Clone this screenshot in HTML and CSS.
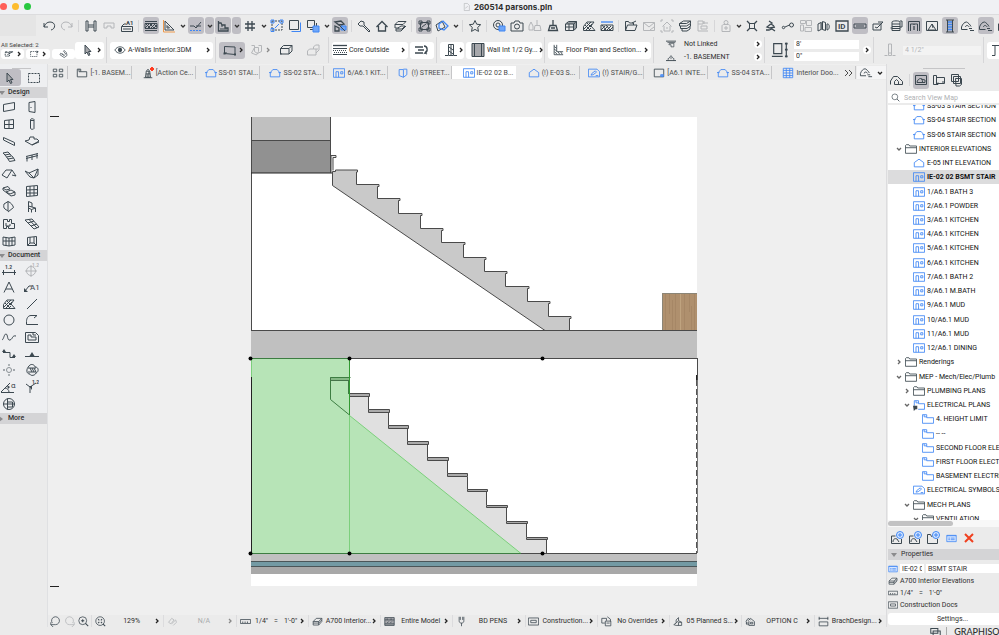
FILE: index.html
```html
<!DOCTYPE html>
<html lang="en">
<head>
<meta charset="utf-8">
<title>260514 parsons.pln</title>
<link rel="stylesheet" href="styles.css">
</head>
<body>
<svg class="sprite" aria-hidden="true">
  <symbol id="right" viewBox="0 0 6 8"><path class="w" d="M2 2l2 2-2 2"/></symbol>
  <symbol id="down" viewBox="0 0 8 8"><path class="w" d="M2 3l2 2 2-2"/></symbol>
  <symbol id="undo" viewBox="0 0 14 14"><path d="M2 4v4h4M2 8c1-3 3-5 6-5 6 0 6 7 1 8"/></symbol>
  <symbol id="redo" viewBox="0 0 14 14"><path d="M12 4v4H8M12 8c-1-3-3-5-6-5-6 0-6 7-1 8"/></symbol>
  <symbol id="beam" viewBox="0 0 14 14"><path d="M2 2h2v4h6V2h2v10h-2V8H4v4H2zM4 6v2M10 6v2"/></symbol>
  <symbol id="beamsm" viewBox="0 0 14 14"><path d="M2 4h10v5H9V7H5v2H2z"/></symbol>
  <symbol id="label" viewBox="0 0 14 14"><path d="M2 7l2-2h2M1.500 7.500h11v5h-11zM3 10h8"/><text class="t6" x="6" y="6">A1</text></symbol>
  <symbol id="hatch" viewBox="0 0 14 14"><path d="M1 2.500h12M1 11.500h12"/><path d="M1 4.500h12v5H1zM1 9l4-4M4 9l4-4M7 9l4-4M10 9l3-3M2 5l4 4M6 5l4 4M10 5l3 3"/></symbol>
  <symbol id="setsq" viewBox="0 0 14 14"><path d="M3 2v9h9zM5 6.500v2.500h2.500z"/><path class="o" d="M1.500 1v12H13"/></symbol>
  <symbol id="guide" viewBox="0 0 14 14"><path d="M1 7h4l2 2 5-6M7 7h5"/><path class="b dash" d="M1 11.500h12"/></symbol>
  <symbol id="snap" viewBox="0 0 14 14"><path class="w" d="M2.500 2v10H12V9H9V6H6L5 4H3"/><path d="M4 10h7M5 7h2"/></symbol>
  <symbol id="grid" viewBox="0 0 14 14"><path class="w" d="M5 2v10M9 2v10M2 5h10M2 9h10"/></symbol>
  <symbol id="resize" viewBox="0 0 14 14"><path class="dash" d="M2 2h10v9H2z"/><path class="b" d="M1 9.500h3v3H1zM10 1h3v3h-3zM1 1h3v3H1zM5 9l4-4"/></symbol>
  <symbol id="layers2" viewBox="0 0 14 14"><path d="M1.500 1.500h9v9h-9z"/><path class="b" d="M3.500 12.500h9v-9"/></symbol>
  <symbol id="dup" viewBox="0 0 14 14"><path d="M1.500 1.500h7v7h-7zM4 10.500h3M10.500 4v3"/><path class="bf" d="M7 7h6v6H7z"/></symbol>
  <symbol id="crane" viewBox="0 0 14 14"><path class="w" d="M2 3l6-1 3 3-5 1zM2 7l4 2v3H2zM8 6l3 3"/><path class="bf" d="M8 7h5v4H8z"/><path d="M6 6l6 6"/></symbol>
  <symbol id="pick" viewBox="0 0 14 14"><path d="M1 5l3-3 3 1v3l6 6-1 1-6-6H3z"/></symbol>
  <symbol id="home" viewBox="0 0 14 14"><path class="w" d="M1.500 8L7 2.500 12.500 8M3.500 7v5h7V7"/></symbol>
  <symbol id="sheet" viewBox="0 0 14 14"><path d="M2 5.500l3-3h8l-3 3zM2 5.500V9h4M5 9l3-2h4l-3 3H3v2h5l5-5"/></symbol>
  <symbol id="group" viewBox="0 0 14 14"><path d="M3.500 3.500h8v7h-8zM2 2h3v3H2zM10 2h3v3h-3zM10 9h3v3h-3zM2 9h3v3H2zM5 8l4-3"/></symbol>
  <symbol id="rot" viewBox="0 0 14 14"><path d="M1 6l6-4 3 6-7 4z"/><path class="b w" d="M4 5l4-3 5 5-4 4-5-2z"/></symbol>
  <symbol id="star" viewBox="0 0 14 14"><path d="M7 1.500l1.700 3.700 4 .5-3 2.700.8 4L7 10.400 3.500 12.400l.8-4-3-2.700 4-.5z"/></symbol>
  <symbol id="camb" viewBox="0 0 14 14"><circle cx="6" cy="6" r="4.500"/><circle cx="6" cy="6" r="2"/><path class="bf" d="M7 7h6v5H7z"/></symbol>
  <symbol id="cam" viewBox="0 0 14 14"><path d="M1 4h3l1-2h4l1 2h3v8H1z"/><circle cx="7" cy="7.500" r="2.500"/></symbol>
  <symbol id="brush" viewBox="0 0 14 14"><path class="w" d="M7 1v5M4 6.500h6l1.500 5h-9zM5 9h4"/></symbol>
  <symbol id="brush2" viewBox="0 0 14 14"><path d="M9 1v5M7 6.500h5l1 5H6zM3 3l2 4v4H1V7z"/></symbol>
  <symbol id="box" viewBox="0 0 14 14"><path d="M1.500 5l3-2.500h8V9l-3 2.500h-8zM1.500 5h8v6.500M9.500 5l3-2.500M2 8h7M5 5v6M3 4h8M11 4v6"/></symbol>
  <symbol id="fillh" viewBox="0 0 14 14"><path d="M1.500 11.500v-4L5 3h7L9 7l4 4.500zM2 10l7-7M4 11l6-6M7 11l2-2M3 6l5 5M5 4l4 4"/></symbol>
  <symbol id="hatchb" viewBox="0 0 14 14"><path class="b w" d="M1 3h12"/><path d="M1 6h12v5.500H1zM1 11l4-4M4 11l4-4M7 11l4-4M10 11l3-3M2 6l4 5M6 6l4 5"/></symbol>
  <symbol id="folder" viewBox="0 0 14 14"><path d="M1.500 11.500v-9h3l1 1.500h4v2M1.500 11.500l2-5.500h9.500l-2 5.500zM8 4l4-2"/></symbol>
  <symbol id="mail" viewBox="0 0 14 14"><path d="M1.500 3.500h11v8h-11zM1.500 3.500L7 8l5.500-4.500M8 11l4-3"/></symbol>
  <symbol id="ghome" viewBox="0 0 14 14"><path d="M1 3V1h2M11 1h2v2M1 11v2h2M13 11v2h-2M2.500 7.500L7 3l4.500 4.500M4 7v5h6V7M6 9h2"/></symbol>
  <symbol id="stack" viewBox="0 0 14 14"><path d="M1.500 4.500l4-2.500h7l-4 2.500zM1.500 4.500V7h7l4-2.500V2M2.500 7v2.500H9l3.500-2.500V4.500M4 9.500V12h5l3-2V7"/></symbol>
  <symbol id="node" viewBox="0 0 14 14"><path d="M2 2h5v3H2zM2 5v7h10M7 4h5M5 7h6v3H5zM8 2v3"/></symbol>
  <symbol id="person" viewBox="0 0 14 14"><circle cx="7" cy="3.500" r="2"/><path d="M3 12.500V7c0-1 1-1.500 2-1.500h4c1 0 2 .5 2 1.500v5.500zM6 8h2v2H6z"/></symbol>
  <symbol id="cross" viewBox="0 0 14 14"><path class="w" d="M2 2l3 3M12 2L9 5M2 12l3-3M12 12L9 9"/><path d="M4.500 4.500h5v5h-5z"/></symbol>
  <symbol id="runner" viewBox="0 0 14 14"><path class="w" d="M6 2l3 2-5 4 3 1 5-1M8 5l3 2M3 11h3l3-1 3 2"/></symbol>
  <symbol id="link" viewBox="0 0 14 14"><circle cx="10.500" cy="6" r="2"/><circle cx="2.500" cy="8.500" r="1.200"/><path d="M4 8l4.500-2"/></symbol>
  <symbol id="puzzle" viewBox="0 0 14 14"><path d="M1.500 1.500h5v3h-5zM7.500 1.500h5v5h-5zM1.500 6h3v6h-3zM6 8.500h6.500v4H6z"/></symbol>
  <symbol id="map" viewBox="0 0 14 14"><path d="M1 5l3-1.500v7L1 12zM5.500 2.500l3 1v8l-3-1zM10 5c3-1 3 6 0 6zM5 3v8"/></symbol>
  <symbol id="idb" viewBox="0 0 14 14"><path class="w" d="M1 2h12v10H1z"/><text class="t8" x="3" y="10">ID</text></symbol>
  <symbol id="bar" viewBox="0 0 14 14"><path d="M1 5h12v4H1zM3 7h8"/></symbol>
  <symbol id="check" viewBox="0 0 14 14"><path d="M2 5h8v6H2zM4 8l2 1 6-6M7 3h5"/></symbol>
  <symbol id="db" viewBox="0 0 14 14"><path d="M3 3c0-1.500 8-1.500 8 0v8.500H3zM3 5h8M3 7.500h8M3 9.500h8M1.500 9h2M11 2h2v6h-2"/></symbol>
  <symbol id="info" viewBox="0 0 14 14"><path d="M1.500 12V2.500h11V12M3.500 12V5h7v7"/><path class="w" d="M7 5v1M7 7v4"/></symbol>
  <symbol id="portal" viewBox="0 0 14 14"><path d="M1 12.500h3v-10h9M4 2.500H1"/></symbol>
  <symbol id="tri" viewBox="0 0 14 14"><path d="M1.500 2.500h11v9h-11zM3 11l4-6 4 6zM7 5l1 4"/></symbol>
  <symbol id="film" viewBox="0 0 14 14"><path class="b w" d="M5 3h4M5 5.500h4M5 8h4M5 10.500h4"/><path d="M4.500 1v12M9.500 1v12M3 13h8M3 1h8"/></symbol>
  <symbol id="cloud" viewBox="0 0 14 14"><path d="M.5 10.500V8c1-3 3-5 5-5 1 0 4 3 4.500 4.500M.5 10.500h6M4.500 8c0-2 3-2 3.500 0M8 9.500h3M9 11.500h4"/></symbol>
  <symbol id="house2" viewBox="0 0 14 14"><path d="M.5 11.500V8l3-4.500h4l5 5v3h-8v-3l2-2 2 2v3"/></symbol>
  <symbol id="eye" viewBox="0 0 14 14"><path d="M1 7c3-5 9-5 12 0-3 5-9 5-12 0z"/><circle class="f" cx="7" cy="7" r="2.500"/></symbol>
  <symbol id="arrow" viewBox="0 0 14 14"><path class="gf" d="M5 2v9l2-2 1.500 3.500 1.500-.7L8.500 8.500H11z"/></symbol>
  <symbol id="marq" viewBox="0 0 14 14"><path class="dash" d="M1.500 2.500h11v9h-11z"/></symbol>
  <symbol id="seltype" viewBox="0 0 14 14"><path class="dash w" d="M1 5h6v5H1z"/><path class="w" d="M6 4h6M4 8l7-4M1 4h3"/></symbol>
  <symbol id="marq2" viewBox="0 0 14 14"><path class="dash" d="M1.500 3.500h9v7h-9z"/><path class="f" d="M10 2l3 2-3 2z"/></symbol>
  <symbol id="magnet" viewBox="0 0 14 14"><path d="M2 8l6 4 4-3-1-4-3-3-1 1 3 4-2 2-5-3zM5 6l2 3"/></symbol>
  <symbol id="para" viewBox="0 0 14 14"><path d="M1.500 10.500v-7L12 4v7.500zM1.500 10.500l2-1"/><path class="f" d="M.5 9.500h2v2h-2zM11 10.500h2v2h-2z"/></symbol>
  <symbol id="shield" viewBox="0 0 14 14"><path d="M1.500 2.500h3v6l3 2 4-2v-6h-3M4.500 4.500h4v4L6.500 12l-5-2z"/></symbol>
  <symbol id="cube" viewBox="0 0 14 14"><path d="M1.500 5.500l3-3H13l-3 3zM1.500 5.500V11H10l3-3V2.500M10 5.500V11"/><path class="f" d="M1 10h1.500v1.500H1z"/></symbol>
  <symbol id="cube2" viewBox="0 0 14 14"><path d="M1.500 8l2-2h4V4l2-2H13v5l-3 3v2H1.500zM7.500 6H12M10 6v4"/></symbol>
  <symbol id="core" viewBox="0 0 14 14"><path class="w" d="M0 2.500h14"/><path d="M0 5.500h14M0 11.500h14"/><path class="dot" d="M0 7.500h14M1 9.500h13"/></symbol>
  <symbol id="flip" viewBox="0 0 14 14"><path class="w" d="M0 4h8M0 10h8M3 7h6"/><path class="w" d="M9 3c4 0 4 6 1 7l1.500-2M10 10l2 1"/></symbol>
  <symbol id="wallp" viewBox="0 0 14 14"><path d="M4.500 1.500h5v11h-5zM1 12.500h3M10 12.500h3M7 2v10M5 4l4 3M5 8l4 3"/></symbol>
  <symbol id="swatch" viewBox="0 0 14 14"><path class="gf" d="M1 .5h12v13H1zM3.500 1v12M10.500 1v12"/></symbol>
  <symbol id="corner" viewBox="0 0 14 14"><path d="M2.500 1v11.500H13M5.500 1v8H13M2.500 3l3 2M2.500 6l3 2M3 9l3 3M7 9l2 3M10 9l2 3"/></symbol>
  <symbol id="topl" viewBox="0 0 14 14"><path class="w" d="M0 3h14"/><path d="M2 5h11M5 6h6v5H7V8H4z"/></symbol>
  <symbol id="botl" viewBox="0 0 14 14"><path class="w" d="M0 12h14"/><path d="M3 12V9h1l3-4 3 4h1v3M7 7v3"/></symbol>
  <symbol id="height" viewBox="0 0 20 20"><path class="w" d="M3 3h9v11H3zM1 17h12"/><path class="w" d="M17 2v16"/><path class="f" d="M15.500 2h3v2h-3zM15.500 8.500h3v2h-3zM15.500 16h3v2h-3z"/></symbol>
  <symbol id="thick" viewBox="0 0 14 14"><path d="M5.500 1v9M8.500 1v9M5.500 10h3v2.500h-3zM1.500 12.500h3M9.500 12.500h3M5.500 1h3"/></symbol>
  <symbol id="grid4" viewBox="0 0 14 14"><path d="M1.500 2.500h4v3h-4zM8.500 2.500h4v3h-4zM1.500 8.500h4v3h-4zM8.500 8.500h4v3h-4z"/></symbol>
  <symbol id="plan" viewBox="0 0 14 14"><path d="M1.500 11.500v-9h4v3h7v6zM3.500 2.500v3h2"/></symbol>
  <symbol id="tower" viewBox="0 0 14 14"><path d="M4 12l1-7h4l1 7zM5 5l2-2.500L9 5M2 12.500h10M4.500 8h5M6 12V8M8 5v7"/></symbol>
  <symbol id="sec" viewBox="0 0 14 14"><path class="b" d="M1.500 11.500v-5l3-3.500h5l3 3.500v5zM0 6.500h3M11 6.500h3"/></symbol>
  <symbol id="ie" viewBox="0 0 14 14"><path class="b" d="M.5 2h13v10H.5zM3.500 12V5.500h3V12M9 5.500h2.500V8H9z"/></symbol>
  <symbol id="elev" viewBox="0 0 14 14"><path class="b" d="M2.500 10V3h5v9zM7.500 12l4-3V2.500h-4"/></symbol>
  <symbol id="pent" viewBox="0 0 14 14"><path class="b" d="M1.500 11.500v-5L7 2.500l5.500 4v5z"/></symbol>
  <symbol id="draw" viewBox="0 0 14 14"><path class="b" d="M.5 2.500h10l3 3v6H.500zM3.500 9.500l1-2 4-3 1.500 1.500-4 3zM9 10h3"/></symbol>
  <symbol id="lay" viewBox="0 0 14 14"><path d="M1.500 2.500h11v9h-11z"/><path class="bf" d="M9 9h3v2H9z"/></symbol>
  <symbol id="sched" viewBox="0 0 14 14"><path class="b" d="M1.500 1.500h11v11h-11zM1.500 4h11M1.500 7h11M1.500 10h11M5 1.500v11M9 1.500v11"/></symbol>
  <symbol id="wall" viewBox="0 0 14 14"><path d="M1.500 4.500l11-2v7l-11 2z"/></symbol>
  <symbol id="door" viewBox="0 0 14 14"><path d="M4 2.500l6-1v11l-6-1zM6 7v1"/></symbol>
  <symbol id="win" viewBox="0 0 14 14"><path d="M2.500 3.500l9-1v9h-9zM2.500 7.500h9M7 3v8.500"/></symbol>
  <symbol id="col" viewBox="0 0 14 14"><path d="M5.500 2.500c0-1 3.500-1 3.500 0v9c0 1-3.500 1-3.500 0zM5.500 3.500H9"/></symbol>
  <symbol id="tbeam" viewBox="0 0 14 14"><path d="M1.500 3.500l11 5v3l-11-5.500z"/></symbol>
  <symbol id="slab" viewBox="0 0 14 14"><path d="M0 7l4-1 1-3h4v2h3l2 2-7 4zM7 11l7-3"/></symbol>
  <symbol id="stair" viewBox="0 0 14 14"><path d="M1 3l5-1 2 2-5 1zM3 5l1.500 2 5-1L8 4M4.500 7L6 9l5.500-1L10 6M6 9l1.500 2.500 5.500-1L11.500 8"/></symbol>
  <symbol id="rail" viewBox="0 0 14 14"><path d="M1 6.500l12-3M1 8.500l12-3M2 6.500v5M7 5v5M12 3.500v5"/></symbol>
  <symbol id="roof" viewBox="0 0 14 14"><path d="M0 8l4-5h6L5 11zM10 3l4 6-4-1"/></symbol>
  <symbol id="shell" viewBox="0 0 14 14"><path d="M0 4l4 2 9-4-4 9-4-1zM4 6l5 5M13 2v6l-4 3"/></symbol>
  <symbol id="sky" viewBox="0 0 14 14"><path d="M1 4l5-1.500 2 2.500-4 1zM4 8l5-2 4 2-5 2zM1 4v2l8 6 4-1V8"/></symbol>
  <symbol id="cw" viewBox="0 0 14 14"><path d="M1.500 2.500l11-1v10l-11 1zM1.500 6l11-.5M1.500 9h11M5 2v10M9 2v10"/></symbol>
  <symbol id="morph" viewBox="0 0 14 14"><path d="M2 4l4-2.500V11L3 9C1.500 8 1.500 6 2 4zM6 1.500c3 1 5 4 5.500 6L6 12"/></symbol>
  <symbol id="chair" viewBox="0 0 14 14"><path d="M3.500 1.500L7 3v4l-3.500-1zM3.500 6v6M3.500 8l3 1.500 4-1.500L7 7M6.500 9.500v3M10.500 8v4"/></symbol>
  <symbol id="zone" viewBox="0 0 14 14"><path d="M1.500 2.500h4v2h2v-2h2v4h3v5h-6v-2h-2v2h-3zM4 6v3h4V7"/></symbol>
  <symbol id="mesh" viewBox="0 0 14 14"><path d="M0 3l7-1 7 8-5 2zM4 2.500l8 8.500M3 6l6-2M6 9l6-2"/></symbol>
  <symbol id="opening" viewBox="0 0 14 14"><path d="M1 3l6 1 6-1v8l-6 1-6-1zM7 4v8M1 7h12M4 3.500v8M10 3.500v8"/></symbol>
  <symbol id="obj" viewBox="0 0 14 14"><path d="M2.500 3.500l9-1v9h-9zM5 3v6h4V3M2.500 11.500L5 9M11.500 11.500L9 9"/></symbol>
  <symbol id="dim" viewBox="0 0 14 14"><path d="M0 9.500h14M1.500 7v5M12.500 7v5"/><text class="t5" x="3" y="6">1.2</text></symbol>
  <symbol id="level" viewBox="0 0 14 14"><circle cx="6" cy="8" r="4.500"/><path d="M6 2v12M0 8h12"/><text class="t5" x="7" y="4">1.2</text></symbol>
  <symbol id="textA" viewBox="0 0 14 14"><path d="M2 12.500L7 2l5 10.500M4 9h6"/></symbol>
  <symbol id="a1" viewBox="0 0 16 14"><path d="M1 11l4-5h3"/><path class="f" d="M0 8v4h4z"/><text class="t8 n" x="6" y="10">A1</text></symbol>
  <symbol id="line" viewBox="0 0 14 14"><path d="M2 12L12 2"/></symbol>
  <symbol id="circ" viewBox="0 0 14 14"><circle cx="7" cy="7" r="5"/></symbol>
  <symbol id="poly" viewBox="0 0 14 14"><path d="M12 2.500H6c-3 0-4.500 3-4.500 6v3H13M12 2.500L9 5"/></symbol>
  <symbol id="spl" viewBox="0 0 14 14"><path d="M0 10c2-1 2-6 4-6s1 7 4 6 2-5 6-4"/></symbol>
  <symbol id="drw" viewBox="0 0 14 14"><path d="M.5 2.500h10l3 3v7H.5zM3 10V5h3v2h5v3zM8 3v2h3"/></symbol>
  <symbol id="sect" viewBox="0 0 14 14"><path d="M1 5.500h7v5h5"/><path class="f" d="M0 5l2-3 2 3zM10 10l2-3 2 3z"/></symbol>
  <symbol id="elv" viewBox="0 0 14 14"><path d="M0 9.500h14"/><path class="f" d="M4.500 9L7 5l2.500 4z"/></symbol>
  <symbol id="iel" viewBox="0 0 14 14"><circle cx="7" cy="7" r="2.500"/><path class="w" d="M7 1v2M7 11v2M1 7h2M11 7h2"/></symbol>
  <symbol id="wk" viewBox="0 0 14 14"><path d="M4 3c2-3 6-1 6 1 4 0 4 5 1 6-1 3-6 3-6 1-4 0-4-5-1-8zM3 5h8M3 9h8M5 5l2 4M7 5l2 4M9 5l2 4"/></symbol>
  <symbol id="ang" viewBox="0 0 16 14"><path d="M0 12.500h13M0 12L9 3M4 8c2 0 4 2 4 4"/><path class="f" d="M6 5l3 2-2 2z"/><text class="t8 n" x="10" y="8">α</text></symbol>
  <symbol id="rad" viewBox="0 0 14 14"><path d="M1 4l4 3 6-4M5 7v6"/><path class="f" d="M4 6h3v4z"/><text class="t5" x="7" y="4">1.2</text></symbol>
  <symbol id="det" viewBox="0 0 14 14"><circle cx="7" cy="7" r="5.500"/><path d="M5.500 1.500v11M1 7h12M5.500 5h5v5h-5"/></symbol>
  <symbol id="fold" viewBox="0 0 14 14"><path d="M.5 12V3l1-1h3l1 1.500h8V12zM.5 5.500h13"/></symbol>
  <symbol id="bfold" viewBox="0 0 14 14"><path class="b" d="M.5 12V2h5v3.500h8V12zM2.500 2v2.500h3"/></symbol>
  <symbol id="bfoldl" viewBox="0 0 14 14"><path class="b" d="M1.500 8V2h5v3.500h7V12H6M3.500 2v2.500h3"/><path class="f" d="M0 8h5v4H3L1 14z"/></symbol>
  <symbol id="search" viewBox="0 0 14 14"><circle cx="6" cy="6" r="4.500"/><path class="w" d="M9.500 9.500L13 13"/></symbol>
  <symbol id="vmap" viewBox="0 0 14 14"><path d="M1.500 2.500h11v9h-11zM3 9.500c0-2 2-4 3.500-4s2 1 2 4zM7 6l4 1v2.500H8"/></symbol>
  <symbol id="lbook" viewBox="0 0 14 14"><path d="M1.500 2.500h3v9h-3zM4.500 4.500h8v6h-8M3 11.500h3v-2M10 9h2"/></symbol>
  <symbol id="pub" viewBox="0 0 14 14"><path d="M1.500 1.500h7v7h-7zM3.500 3.500h7v7h-7zM5.500 5.500h6v6l-2 1.500H6z"/></symbol>
  <symbol id="addv" viewBox="0 0 14 14"><path d="M1.500 5v7.500h10V8M1.500 5h4M3 11c0-3 2-4 4-3l2 3"/><circle class="bl" cx="10" cy="4" r="3.500"/><path class="b" d="M10 2v4M8 4h4"/></symbol>
  <symbol id="addf" viewBox="0 0 14 14"><path d="M1.500 12.500v-9h3l1 2h1M1.500 12.500h10V8"/><circle class="bl" cx="10" cy="4" r="3.500"/><path class="b" d="M10 2v4M8 4h4"/></symbol>
  <symbol id="props" viewBox="0 0 14 14"><path class="bl" d="M1 3h12v8H1z"/><path class="b" d="M1 3.500h12M3 6.500h2M6 6.500h5M3 8.500h2M6 8.500h5"/></symbol>
  <symbol id="x" viewBox="0 0 14 14"><path class="r" d="M3 3l8 8M11 3l-8 8"/></symbol>
  <symbol id="lyr" viewBox="0 0 14 14"><path d="M1.500 11.500V7l4-4h7v4l-4 4.500zM1.500 7h7l4-4M8.500 7v4.500M1.500 9h7l4-4"/></symbol>
  <symbol id="scale" viewBox="0 0 14 14"><path d="M.5 4.500h13v5H.5zM3.500 9V7M6.500 9V7M9.500 9V7"/></symbol>
  <symbol id="frame" viewBox="0 0 14 14"><path d="M.5 2.500h13v9H.5zM3.500 5.500h7v3h-7z"/></symbol>
  <symbol id="zoomb" viewBox="0 0 14 14"><path d="M3 9a5 5 0 1 1 4 2H1M1 8v3M4 14l-3-3"/></symbol>
  <symbol id="zoomf" viewBox="0 0 14 14"><path d="M11 9a5 5 0 1 0-4 2h6M13 8v3M10 14l3-3"/></symbol>
  <symbol id="zoomp" viewBox="0 0 14 14"><circle cx="6" cy="6" r="5"/><path class="w" d="M9.500 9.500L13 13M4 6h4M6 4v4"/></symbol>
  <symbol id="zoomx" viewBox="0 0 14 14"><circle cx="6.500" cy="6.500" r="5.500"/><path class="w" d="M10 10l3 3M4 4l1.500 1.500M9 4L7.500 5.500M4 9l1.500-1.500M9 9L7.500 7.500"/></symbol>
  <symbol id="orient" viewBox="0 0 14 14"><path d="M2 8l4-5 3 2-4 5zM6 10l5-5 1 3-4 4"/></symbol>
  <symbol id="struct" viewBox="0 0 14 14"><path class="gf" d="M1 2h12v10H1z"/><path d="M1 5h12M4 9l2-2M8 9l2-2M4 3v2M9 3v2M1 10h12"/></symbol>
  <symbol id="pen" viewBox="0 0 14 14"><path d="M4 1v5c0 2 1 3 3 3s3-1 3-3V1M7 9v4M5.500 1v4M8.500 1v4"/></symbol>
  <symbol id="over" viewBox="0 0 14 14"><path d="M1 3h6v3M1 3v6h4M5.500 6.500h7v6h-7zM8 1l4 3v3M7 9h4"/></symbol>
  <symbol id="reno" viewBox="0 0 14 14"><path d="M1 11l3-2V5l3-3v4l4 2v4H4zM7 6l-3 3M7 12V8h4"/></symbol>
  <symbol id="opt" viewBox="0 0 14 14"><path d="M1 7l3-4 3 2M2 7v4M4 6l3-3 5 4v5H5V7zM1 9h4M3 11h2M7 8h3v2H7z"/></symbol>
  <symbol id="dims" viewBox="0 0 14 14"><path d="M1 3h12M1.500 1v4M12.500 1v4M1.500 7.500h11v5h-11z"/></symbol>
  <symbol id="wins" viewBox="0 0 14 14"><path class="w" d="M1 2h9v6H1zM4 11V5h9v6z"/></symbol>
  <symbol id="doc" viewBox="0 0 14 14"><path d="M3.500 1.500h5l3 3v8h-8zM5 9l4-3"/></symbol>
</svg>

<header class="titlebar">
  <div class="lights"><i class="red"></i><i class="yellow"></i><i class="green"></i></div>
  <h1><svg class="ic dim"><use href="#doc"/></svg>260514 parsons.pln</h1>
</header>

<nav class="tools" aria-label="Standard toolbar">
  <div class="blank"></div>
  <button class="tb" aria-label="Undo"><svg class="ic"><use href="#undo"/></svg></button>
  <button class="tb dim" aria-label="Redo"><svg class="ic"><use href="#redo"/></svg></button>
  <hr>
  <button class="tb" aria-label="Pick up"><svg class="ic"><use href="#beam"/></svg></button>
  <button class="tb dim" aria-label="Inject"><svg class="ic"><use href="#beamsm"/></svg></button>
  <button class="tb" aria-label="Favorites"><svg class="ic"><use href="#label"/></svg></button>
  <hr>
  <button class="tb on" aria-label="Trace"><svg class="ic"><use href="#hatch"/></svg></button>
  <button class="tb" aria-label="Set square"><svg class="ic"><use href="#setsq"/></svg></button>
  <button class="cv" aria-label="Set square options"><svg><use href="#down"/></svg></button>
  <button class="tb on" aria-label="Guides"><svg class="ic"><use href="#guide"/></svg></button>
  <button class="cv on" aria-label="Guide options"><svg><use href="#down"/></svg></button>
  <button class="tb on" aria-label="Snap"><svg class="ic"><use href="#snap"/></svg></button>
  <button class="cv on" aria-label="Snap options"><svg><use href="#down"/></svg></button>
  <button class="tb" aria-label="Grid"><svg class="ic"><use href="#grid"/></svg></button>
  <button class="cv" aria-label="Grid options"><svg><use href="#down"/></svg></button>
  <button class="tb" aria-label="Resize"><svg class="ic"><use href="#resize"/></svg></button>
  <button class="tb" aria-label="Layers"><svg class="ic"><use href="#layers2"/></svg></button>
  <button class="tb" aria-label="Duplicate"><svg class="ic"><use href="#dup"/></svg></button>
  <button class="cv" aria-label="Duplicate options"><svg><use href="#down"/></svg></button>
  <button class="tb on" aria-label="Suspend groups"><svg class="ic"><use href="#crane"/></svg></button>
  <hr>
  <button class="tb" aria-label="Find"><svg class="ic"><use href="#pick"/></svg></button>
  <button class="tb" aria-label="Home"><svg class="ic"><use href="#home"/></svg></button>
  <button class="tb" aria-label="Section"><svg class="ic"><use href="#sheet"/></svg></button>
  <hr>
  <button class="tb on" aria-label="Group"><svg class="ic"><use href="#group"/></svg></button>
  <button class="tb" aria-label="Rotate"><svg class="ic"><use href="#rot"/></svg></button>
  <button class="cv" aria-label="Rotate options"><svg><use href="#down"/></svg></button>
  <hr>
  <button class="tb" aria-label="Star"><svg class="ic"><use href="#star"/></svg></button>
  <hr>
  <button class="tb" aria-label="Render"><svg class="ic"><use href="#camb"/></svg></button>
  <button class="tb" aria-label="Camera"><svg class="ic"><use href="#cam"/></svg></button>
  <button class="tb dim" aria-label="Surface brush"><svg class="ic"><use href="#brush2"/></svg></button>
  <button class="tb" aria-label="Brush"><svg class="ic"><use href="#brush"/></svg></button>
  <button class="tb" aria-label="Materials"><svg class="ic"><use href="#box"/></svg></button>
  <button class="tb" aria-label="Fills"><svg class="ic"><use href="#fillh"/></svg></button>
  <button class="tb" aria-label="Composites"><svg class="ic"><use href="#hatchb"/></svg></button>
  <hr>
  <div class="late">
    <button class="tb" aria-label="Open"><svg class="ic"><use href="#folder"/></svg></button>
    <button class="tb dim" aria-label="Send"><svg class="ic"><use href="#mail"/></svg></button>
    <button class="tb dim" aria-label="Project"><svg class="ic"><use href="#ghome"/></svg></button>
    <button class="tb" aria-label="Stories"><svg class="ic"><use href="#stack"/></svg></button>
    <button class="tb dim" aria-label="Nodes"><svg class="ic"><use href="#node"/></svg></button>
    <hr>
    <button class="tb dim" aria-label="Teamwork"><svg class="ic"><use href="#person"/></svg></button>
    <button class="cv" aria-label="Teamwork options"><svg><use href="#down"/></svg></button>
    <button class="tb" aria-label="Fit"><svg class="ic"><use href="#cross"/></svg></button>
    <button class="tb" aria-label="Walk"><svg class="ic"><use href="#runner"/></svg></button>
    <button class="tb" aria-label="Hotlink"><svg class="ic"><use href="#link"/></svg></button>
    <button class="tb dim" aria-label="Module"><svg class="ic"><use href="#puzzle"/></svg></button>
    <button class="tb" aria-label="Map"><svg class="ic"><use href="#map"/></svg></button>
    <button class="tb" aria-label="Element ID"><svg class="ic"><use href="#idb"/></svg></button>
    <button class="tb on" aria-label="Tracker"><svg class="ic"><use href="#bar"/></svg></button>
    <button class="tb" aria-label="Check"><svg class="ic"><use href="#check"/></svg></button>
    <button class="tb" aria-label="Attributes"><svg class="ic"><use href="#db"/></svg></button>
    <button class="tb on" aria-label="Info box"><svg class="ic"><use href="#info"/></svg></button>
    <button class="tb" aria-label="Terrain"><svg class="ic"><use href="#tri"/></svg></button>
    <button class="tb on" aria-label="Tab bar"><svg class="ic"><use href="#film"/></svg></button>
    <button class="tb" aria-label="Navigator popup"><svg class="ic"><use href="#cloud"/></svg></button>
    <button class="tb on" aria-label="Navigator"><svg class="ic"><use href="#cloud"/></svg></button>
    <button class="tb" aria-label="Organizer"><svg class="ic"><use href="#box"/></svg></button>
  </div>
</nav>

<section class="info" aria-label="Info box">
  <div class="sel">
    <span>All Selected: 2</span>
    <div>
      <button aria-label="Selection type"><svg class="ic"><use href="#seltype"/></svg><svg class="ch"><use href="#right"/></svg></button>
      <button aria-label="Marquee type"><svg class="ic"><use href="#marq2"/></svg><svg class="ch"><use href="#right"/></svg></button>
      <button aria-label="Magnet"><svg class="ic"><use href="#magnet"/></svg></button>
    </div>
  </div>
  <button class="pop small" aria-label="Arrow"><svg class="ic"><use href="#arrow"/></svg><svg class="ch"><use href="#right"/></svg></button>
  <hr>
  <button class="pop wide"><svg class="ic"><use href="#eye"/></svg><span>A-Walls Interior.3DM</span><svg class="ch"><use href="#right"/></svg></button>
  <hr>
  <button class="pop flat on" aria-label="Straight wall"><svg class="ic"><use href="#para"/></svg><svg class="ch"><use href="#right"/></svg></button>
  <button class="pop flat dim" aria-label="Curved wall"><svg class="ic"><use href="#shield"/></svg><svg class="ch"><use href="#right"/></svg></button>
  <button class="pop flat" aria-label="Single"><svg class="ic"><use href="#cube"/></svg></button>
  <button class="pop flat dim" aria-label="Chained"><svg class="ic"><use href="#cube2"/></svg></button>
  <hr>
  <button class="pop mid"><svg class="ic"><use href="#core"/></svg><span>Core Outside</span><svg class="ch"><use href="#right"/></svg></button>
  <button class="pop tiny" aria-label="Flip wall"><svg class="ic"><use href="#flip"/></svg></button>
  <hr>
  <button class="pop tiny" aria-label="Wall profile"><svg class="ic"><use href="#wallp"/></svg><svg class="ch"><use href="#right"/></svg></button>
  <button class="pop mid mat"><svg class="ic"><use href="#swatch"/></svg><span>Wall Int 1/2 Gy...</span><svg class="ch"><use href="#right"/></svg></button>
  <hr>
  <button class="pop wide"><svg class="ic"><use href="#corner"/></svg><span>Floor Plan and Section...</span><svg class="ch"><use href="#right"/></svg></button>
  <hr>
  <div class="links">
    <svg class="ic"><use href="#topl"/></svg><span>Not Linked</span><button class="round" aria-label="Top link"><svg class="ch"><use href="#right"/></svg></button>
    <svg class="ic"><use href="#botl"/></svg><span>-1. BASEMENT</span><button class="round" aria-label="Home story"><svg class="ch"><use href="#right"/></svg></button>
  </div>
  <hr>
  <svg class="ic hgt"><use href="#height"/></svg>
  <div class="fields">
    <input type="text" aria-label="Wall height" value="8'">
    <input type="text" aria-label="Base offset" value="0&quot;">
  </div>
  <button class="round" aria-label="Height settings"><svg class="ch"><use href="#right"/></svg></button>
  <hr>
  <svg class="ic dim thk"><use href="#thick"/></svg>
  <input class="thin" type="text" aria-label="Wall thickness" value="4 1/2&quot;" disabled>
  <hr>
  <button class="pop edge" aria-label="Geometry"><svg class="ic"><use href="#portal"/></svg></button>
</section>

<div class="work">
  <aside class="palette" aria-label="Toolbox">
    <div class="grip"></div>
    <div class="top">
      <button class="on" aria-label="Arrow"><svg class="ic"><use href="#arrow"/></svg></button>
      <button aria-label="Marquee"><svg class="ic"><use href="#marq"/></svg></button>
    </div>
    <h2><svg class="tri"><path d="M0 1h6L3 5z"/></svg>Design</h2>
    <div class="set">
      <button aria-label="Wall"><svg class="ic"><use href="#wall"/></svg></button><button aria-label="Door"><svg class="ic"><use href="#door"/></svg></button>
      <button aria-label="Window"><svg class="ic"><use href="#win"/></svg></button><button aria-label="Column"><svg class="ic"><use href="#col"/></svg></button>
      <button aria-label="Beam"><svg class="ic"><use href="#tbeam"/></svg></button><button aria-label="Slab"><svg class="ic lg"><use href="#slab"/></svg></button>
      <button aria-label="Stair"><svg class="ic"><use href="#stair"/></svg></button><button aria-label="Railing"><svg class="ic"><use href="#rail"/></svg></button>
      <button aria-label="Roof"><svg class="ic lg"><use href="#roof"/></svg></button><button aria-label="Shell"><svg class="ic"><use href="#shell"/></svg></button>
      <button aria-label="Skylight"><svg class="ic"><use href="#sky"/></svg></button><button aria-label="Curtain wall"><svg class="ic"><use href="#cw"/></svg></button>
      <button aria-label="Morph"><svg class="ic"><use href="#morph"/></svg></button><button aria-label="Object"><svg class="ic"><use href="#chair"/></svg></button>
      <button aria-label="Zone"><svg class="ic"><use href="#zone"/></svg></button><button aria-label="Mesh"><svg class="ic lg"><use href="#mesh"/></svg></button>
      <button aria-label="Facade"><svg class="ic"><use href="#opening"/></svg></button><button aria-label="Opening"><svg class="ic"><use href="#obj"/></svg></button>
    </div>
    <h2><svg class="tri"><path d="M0 1h6L3 5z"/></svg>Document</h2>
    <div class="set">
      <button aria-label="Dimension"><svg class="ic"><use href="#dim"/></svg></button><button class="dim" aria-label="Level dimension"><svg class="ic"><use href="#level"/></svg></button>
      <button aria-label="Text"><svg class="ic"><use href="#textA"/></svg></button><button aria-label="Label"><svg class="ic lg"><use href="#a1"/></svg></button>
      <button aria-label="Fill"><svg class="ic"><use href="#fillh"/></svg></button><button aria-label="Line"><svg class="ic"><use href="#line"/></svg></button>
      <button aria-label="Circle"><svg class="ic"><use href="#circ"/></svg></button><button aria-label="Polyline"><svg class="ic"><use href="#poly"/></svg></button>
      <button aria-label="Spline"><svg class="ic"><use href="#spl"/></svg></button><button aria-label="Drawing"><svg class="ic"><use href="#drw"/></svg></button>
      <button aria-label="Section"><svg class="ic"><use href="#sect"/></svg></button><button aria-label="Elevation"><svg class="ic"><use href="#elv"/></svg></button>
      <button class="mut" aria-label="Interior elevation"><svg class="ic"><use href="#iel"/></svg></button><button aria-label="Worksheet"><svg class="ic"><use href="#wk"/></svg></button>
      <button aria-label="Angle dimension"><svg class="ic lg"><use href="#ang"/></svg></button><button aria-label="Radial dimension"><svg class="ic"><use href="#rad"/></svg></button>
      <button aria-label="Detail"><svg class="ic"><use href="#det"/></svg></button>
    </div>
    <h2><svg class="tri"><path d="M0 0v6l4-3z"/></svg>More</h2>
  </aside>

  <main>
    <nav class="tabs" aria-label="Open views">
      <button class="all" aria-label="All tabs"><svg class="ic"><use href="#grid4"/></svg></button>
      <button><svg class="ic"><use href="#plan"/></svg>[-1. BASEM...</button>
      <button class="alert"><svg class="ic"><use href="#tower"/></svg>[Action Ce...</button>
      <button><svg class="ic"><use href="#sec"/></svg>SS-01 STAI...</button>
      <button><svg class="ic"><use href="#sec"/></svg>SS-02 STA...</button>
      <button><svg class="ic"><use href="#ie"/></svg>6/A6.1 KIT...</button>
      <button><svg class="ic"><use href="#elev"/></svg>(!) STREET...</button>
      <button class="cur"><svg class="ic"><use href="#ie"/></svg>IE-02 02 B...</button>
      <button><svg class="ic"><use href="#pent"/></svg>(!) E-03 S...</button>
      <button><svg class="ic"><use href="#draw"/></svg>(!) STAIR/G...</button>
      <button><svg class="ic"><use href="#lay"/></svg>[A6.1 INTE...</button>
      <button><svg class="ic"><use href="#sec"/></svg>SS-04 STA...</button>
      <button class="last"><svg class="ic"><use href="#sched"/></svg>Interior Doo...<svg class="more"><path d="M1 1l3 3-3 3M5 1l3 3-3 3"/></svg></button>
      <button class="navb" aria-label="Navigator"><svg class="ic lg"><use href="#cloud"/></svg><svg class="dn"><use href="#down"/></svg></button>
    </nav>

    <svg class="canvas" viewBox="48 80 838 535" role="img" aria-label="Interior elevation of the basement stair">
      <path class="ink2" d="M50 116.500h9M50 586.500h9"/>
      <rect x="251" y="117" width="446" height="469" fill="#fff"/>
      <rect x="251" y="117" width="80" height="23" fill="#c0c0c0"/>
      <rect x="251" y="140" width="80" height="33" fill="#919191"/>
      <path class="ink" d="M251 140.500h80M330.500 117v56M251.500 117v214"/>
      <path class="ink2" d="M251 173h81"/>
      <path class="ink" fill="#e8e8e8" d="M331 155.500h5v2h-3v13M331 155v18"/>
      <path fill="#c9c9c9" class="ink" d="M332.500 185.500v-14h3v-1.500H357.500v2h-1V184.500H379v2h-1.500V198.500H400v2h-1.500V213.500H422v2h-1.500V228.500H443v2h-1.500V242.500H465v2h-1.500V257.500H486v2h-1.500V271.500H507v2h-1.500V286.500H529v2h-1.500V301.500H550v2h-1.500V316.500H571v2h-1.500V330.500H545z"/>
      <rect x="662" y="293" width="35" height="37" fill="#af906e"/>
      <path d="M665.500 294v36M669.500 294v20M672.500 300v30M675.500 294v36M684.500 294v36M689.500 294v18M691.500 306v24M694.500 294v36" stroke="#a68766" fill="none"/>
      <path d="M680.500 294v36" stroke="#bfa37f"/>
      <path d="M662.500 330v-36.500H697" stroke="#8b8577" fill="none"/>
      <rect x="251" y="331" width="446" height="27" fill="#c0c0c0"/>
      <path class="ink" d="M251 330.500h446"/>
      <path fill="#e0e0e0" d="M349 394h20v15h20v16h19v16h20v16h20v16h20v16h19v16h20v16h20v17h20v16h-26L349 416z"/>
      <path fill="#b7e4b7" stroke="#7ccf7c" d="M251.500 358.500h98v57L521 553.500H251.500zM349.500 416v137"/>
      <path class="ink" fill="none" d="M368.500 397v12.500M388.500 413v12.500M407.500 429v12.500M427.500 445v12.500M447.500 461v12.500M467.500 477v12.500M486.500 492v13M506.500 508v13M526.500 524v13M546.500 540v13"/>
      <path class="ink" fill="#aaa" d="M349.500 393.500h20v3h-20zM368.500 409.500h21v3h-21zM388.500 425.500h20v3h-20zM407.500 441.500h21v3h-21zM427.500 457.500h21v3h-21zM447.500 473.500h20v3h-20zM467.500 489.500h20v2h-20zM486.500 505.500h21v2h-21zM506.500 521.500h21v2h-21zM526.500 537.500h21v2h-21z"/>
      <path fill="#86b986" stroke="#46734a" d="M330.500 377.500h19v3h-19z"/>
      <path class="green" fill="none" d="M330.500 380v19.500l19 15.500M348.500 381v13M330.500 377.500h20"/>
      <path stroke="#319a31" stroke-width="1" d="M349.500 358v57"/>
      <path class="ink" d="M251 358.500h446M521 553.500h176"/>
      <path class="green" d="M251 358.500h98M251 553.500h270"/>
      <path class="ink" d="M697.500 358v22"/>
      <path stroke="#777" d="M697.500 380v173"/>
      <path stroke="#555" stroke-dasharray="6 3" d="M696.500 380v173"/>
      <path class="ink2" d="M251.500 377v176M696.500 375v5"/>
      <rect x="251" y="554" width="446" height="8" fill="#c0c0c0"/>
      <rect x="251" y="562" width="446" height="4" fill="#739aa4"/>
      <rect x="251" y="566" width="446" height="8" fill="#a8a8a8"/>
      <path stroke="#4b5659" d="M251 561.500h446M251 566.500h446"/>
      <g fill="#000"><circle cx="250.500" cy="358.500" r="2"/><circle cx="349.500" cy="358.500" r="2"/><circle cx="542.500" cy="358.500" r="2"/><circle cx="250.500" cy="553.500" r="2"/><circle cx="349.500" cy="553.500" r="2"/><circle cx="542.500" cy="553.500" r="2"/></g>
    </svg>

    <footer class="status">
      <div class="zooms">
        <button aria-label="Previous zoom"><svg class="ic sm"><use href="#zoomb"/></svg></button>
        <button class="dim" aria-label="Next zoom"><svg class="ic sm"><use href="#zoomf"/></svg></button>
        <button aria-label="Zoom in"><svg class="ic sm"><use href="#zoomp"/></svg></button>
      </div>
      <button><svg class="ic sm"><use href="#zoomx"/></svg><span>129%</span><svg class="ch"><use href="#right"/></svg></button>
      <button class="dim"><svg class="ic sm"><use href="#orient"/></svg><span>N/A</span><svg class="ch"><use href="#right"/></svg></button>
      <button><svg class="ic sm"><use href="#scale"/></svg><span class="gap"><b>1/4"</b><b>=</b><b>1'-0"</b></span><svg class="ch"><use href="#right"/></svg></button>
      <button><svg class="ic sm"><use href="#lyr"/></svg><span>A700 Interior...</span><svg class="ch"><use href="#right"/></svg></button>
      <button><svg class="ic sm"><use href="#struct"/></svg><span>Entire Model</span><svg class="ch"><use href="#right"/></svg></button>
      <button><svg class="ic sm"><use href="#pen"/></svg><span>BD PENS</span><svg class="ch"><use href="#right"/></svg></button>
      <button><svg class="ic sm"><use href="#frame"/></svg><span>Construction...</span><svg class="ch"><use href="#right"/></svg></button>
      <button><svg class="ic sm"><use href="#over"/></svg><span>No Overrides</span><svg class="ch"><use href="#right"/></svg></button>
      <button><svg class="ic sm"><use href="#reno"/></svg><span>05 Planned S...</span><svg class="ch"><use href="#right"/></svg></button>
      <button><svg class="ic sm"><use href="#opt"/></svg><span>OPTION C</span><svg class="ch"><use href="#right"/></svg></button>
      <button><svg class="ic sm"><use href="#dims"/></svg><span>BrachDesign...</span><svg class="ch"><use href="#right"/></svg></button>
    </footer>
  </main>

  <aside class="nav" aria-label="Navigator">
    <div class="grip"></div>
    <div class="maps">
      <button aria-label="Project map"><svg class="ic"><use href="#house2"/></svg></button>
      <hr>
      <button class="on" aria-label="View map"><svg class="ic"><use href="#vmap"/></svg></button>
      <button aria-label="Layout book"><svg class="ic"><use href="#lbook"/></svg></button>
      <button aria-label="Publisher sets"><svg class="ic"><use href="#pub"/></svg></button>
    </div>
    <label class="search"><svg class="ic sm"><use href="#search"/></svg><input type="search" placeholder="Search View Map" aria-label="Search View Map"></label>
    <div class="tree">
      <ul>
        <li class="l1"><svg class="ic sm"><use href="#sec"/></svg>SS-03 STAIR SECTION</li>
        <li class="l1"><svg class="ic sm"><use href="#sec"/></svg>SS-04 STAIR SECTION</li>
        <li class="l1"><svg class="ic sm"><use href="#sec"/></svg>SS-06 STAIR SECTION</li>
        <li class="l0"><svg class="dn"><use href="#down"/></svg><svg class="ic sm"><use href="#fold"/></svg>INTERIOR ELEVATIONS</li>
        <li class="l1"><svg class="ic sm"><use href="#pent"/></svg>E-05 INT ELEVATION</li>
        <li class="l1 picked"><svg class="ic sm"><use href="#ie"/></svg>IE-02 02 BSMT STAIR</li>
        <li class="l1"><svg class="ic sm"><use href="#ie"/></svg>1/A6.1 BATH 3</li>
        <li class="l1"><svg class="ic sm"><use href="#ie"/></svg>2/A6.1 POWDER</li>
        <li class="l1"><svg class="ic sm"><use href="#ie"/></svg>3/A6.1 KITCHEN</li>
        <li class="l1"><svg class="ic sm"><use href="#ie"/></svg>4/A6.1 KITCHEN</li>
        <li class="l1"><svg class="ic sm"><use href="#ie"/></svg>5/A6.1 KITCHEN</li>
        <li class="l1"><svg class="ic sm"><use href="#ie"/></svg>6/A6.1 KITCHEN</li>
        <li class="l1"><svg class="ic sm"><use href="#ie"/></svg>7/A6.1 BATH 2</li>
        <li class="l1"><svg class="ic sm"><use href="#ie"/></svg>8/A6.1 M.BATH</li>
        <li class="l1"><svg class="ic sm"><use href="#ie"/></svg>9/A6.1 MUD</li>
        <li class="l1"><svg class="ic sm"><use href="#ie"/></svg>10/A6.1 MUD</li>
        <li class="l1"><svg class="ic sm"><use href="#ie"/></svg>11/A6.1 MUD</li>
        <li class="l1"><svg class="ic sm"><use href="#ie"/></svg>12/A6.1 DINING</li>
        <li class="l0"><svg class="dn"><use href="#right"/></svg><svg class="ic sm"><use href="#fold"/></svg>Renderings</li>
        <li class="l0"><svg class="dn"><use href="#down"/></svg><svg class="ic sm"><use href="#fold"/></svg>MEP - Mech/Elec/Plumb</li>
        <li class="l1 has"><svg class="dn"><use href="#right"/></svg><svg class="ic sm"><use href="#fold"/></svg>PLUMBING PLANS</li>
        <li class="l1 has"><svg class="dn"><use href="#down"/></svg><svg class="ic sm"><use href="#bfoldl"/></svg>ELECTRICAL PLANS</li>
        <li class="l2"><svg class="ic sm"><use href="#bfold"/></svg>4. HEIGHT LIMIT</li>
        <li class="l2"><svg class="ic sm"><use href="#bfold"/></svg>-- --</li>
        <li class="l2"><svg class="ic sm"><use href="#bfold"/></svg>SECOND FLOOR ELECTRICAL</li>
        <li class="l2"><svg class="ic sm"><use href="#bfold"/></svg>FIRST FLOOR ELECTRICAL</li>
        <li class="l2"><svg class="ic sm"><use href="#bfold"/></svg>BASEMENT ELECTRICAL</li>
        <li class="l1"><svg class="ic sm"><use href="#draw"/></svg>ELECTRICAL SYMBOLS</li>
        <li class="l1 has"><svg class="dn"><use href="#down"/></svg><svg class="ic sm"><use href="#fold"/></svg>MECH PLANS</li>
        <li class="l2 has"><svg class="dn"><use href="#down"/></svg><svg class="ic sm"><use href="#fold"/></svg>VENTILATION</li>
      </ul>
    </div>
    <div class="hscroll"><i></i></div>
    <div class="acts">
      <button aria-label="New view"><svg class="ic"><use href="#addv"/></svg></button>
      <button aria-label="Clone folder"><svg class="ic"><use href="#addv"/></svg></button>
      <button aria-label="New folder"><svg class="ic"><use href="#addf"/></svg></button>
      <button aria-label="View settings"><svg class="ic sm"><use href="#props"/></svg></button>
      <button aria-label="Delete"><svg class="ic"><use href="#x"/></svg></button>
    </div>
    <h2><svg class="tri"><path d="M0 1h6L3 5z"/></svg>Properties</h2>
    <div class="props">
      <div class="names"><svg class="ic sm"><use href="#props"/></svg><input type="text" class="vid" aria-label="View ID" value="IE-02 02"><input type="text" class="vname" aria-label="View name" value="BSMT STAIR"></div>
      <div><svg class="ic sm"><use href="#lyr"/></svg>A700 Interior Elevations</div>
      <div><svg class="ic sm"><use href="#scale"/></svg><span class="gap"><b>1/4"</b><b>=</b><b>1'-0"</b></span></div>
      <div><svg class="ic sm"><use href="#frame"/></svg>Construction Docs</div>
    </div>
    <button class="settings">Settings...</button>
  </aside>
</div>

<footer class="brand"><svg class="ic sm"><use href="#wins"/></svg><span>GRAPHISOFT</span></footer>
</body>
</html>
```
FILE: styles.css
```css
* { box-sizing: border-box; }
html, body { height: 100%; }
body {
  margin: 0;
  display: flex;
  flex-direction: column;
  overflow: hidden;
  background: #ebebeb;
  color: #2e2e2e;
  font: 7px/10px Roboto, "Liberation Sans", sans-serif;
  white-space: nowrap;
}
button, input {
  font: inherit;
  color: inherit;
  border: 0;
  padding: 0;
  margin: 0;
  background: none;
  min-width: 0;
}
button { display: flex; align-items: center; justify-content: center; flex: none; }
input:focus { outline: 1px solid #9cc3fb; }
h1, h2, ul { margin: 0; padding: 0; }
b { font-weight: inherit; }
.sprite { display: none; }

/* icons */
svg { flex: none; fill: none; stroke: currentColor; }
.ic { width: 14px; height: 14px; color: #3c4850; stroke-width: 1; }
.ic.sm { width: 11px; height: 11px; }
.ic.lg { width: 16px; }
.ch { width: 6px; height: 8px; color: #222; }
.dn { width: 8px; height: 8px; color: #666; }
.w { stroke-width: 1.3; }
.b { stroke: #3f86f4; }
.bl { stroke: #3f86f4; fill: #d8e7ff; }
.bf { stroke: #3f86f4; fill: #6fa6f8; }
.o { stroke: #ee9a4d; }
.r { stroke: #f0401f; stroke-width: 2; }
.f { fill: currentColor; stroke: none; }
.gf { fill: #a7a8ac; }
.dash { stroke-dasharray: 2 1; }
.dot { stroke-dasharray: 1 1; }
.t5, .t6, .t8 { fill: currentColor; stroke: none; font-family: Roboto, sans-serif; font-weight: 700; }
.t5 { font-size: 5px; }
.t6 { font-size: 6px; }
.t8 { font-size: 8px; }
.n { font-weight: 400; }
.dim .ic, .ic.dim { color: #b4b6b9; }
.dim .ch { color: #888; }
.mut .ic { color: #8a9196; }
.on { background: #bfbec4; border-radius: 3px; }

/* title bar */
.titlebar {
  height: 15px;
  flex: none;
  display: flex;
  align-items: center;
  justify-content: center;
  background: #f0f1f4;
  border-bottom: 1px solid #dcdcde;
  padding: 0 0 1px 15px;
  position: relative;
}
.titlebar h1 { display: flex; align-items: center; gap: 3px; font: 700 8px/12px Inter, sans-serif; }
.titlebar .ic { width: 9px; height: 10px; }
.lights { position: absolute; left: 0; top: 3px; display: flex; gap: 5px; }
.lights i { width: 7px; height: 7px; border-radius: 50%; }
.red { background: #ff5f57; }
.yellow { background: #fdbc2e; }
.lights .green { background: #28c840; }

/* toolbar */
.tools { height: 21px; flex: none; display: flex; align-items: center; overflow: hidden; }
.blank { width: 40px; height: 21px; flex: none; background: linear-gradient(90deg, #e5e5e5 36px, #ebebeb 36px); }
.tb { width: 18px; height: 17px; }
.tb.on { width: 16px; margin: 0 1px; }
.cv { width: 9px; height: 17px; }
.cv svg { width: 8px; height: 8px; color: #333; }
hr { flex: none; width: 1px; height: 12px; margin: 0 3px 0 2px; border: 0; background: #d6d6d8; }
.late { display: flex; align-items: center; }
.late hr { margin: 0 2px; }
.late .cv { width: 8px; }

/* info box */
.info { height: 28px; flex: none; display: flex; align-items: center; overflow: hidden; }
.info > hr { height: 26px; margin: 0 3px 0 2px; }
.sel { width: 75px; flex: none; font-size: 6px; line-height: 8px; color: #444; padding-left: 1px; }
.sel div { display: flex; gap: 2px; }
.sel button { flex: 1; height: 10px; background: #fff; border-radius: 3px; gap: 1px; }
.sel .ic { width: 11px; height: 10px; }
.pop { height: 17px; background: #fff; border-radius: 3px; padding: 0 2px 0 4px; margin-right: 2px; justify-content: space-between; }
.pop:has(+ hr) { margin-right: 0; }
.pop span { flex: 1; text-align: left; padding-left: 2px; }
.small { width: 29px; padding-left: 5px; }
.wide { width: 103px; }
.wide .ic { width: 12px; }
.mid { width: 76px; padding-left: 1px; }
.mat { padding-left: 5px; }
.tiny { width: 24px; }
.tiny:not(:has(.ch)) { justify-content: center; padding: 0; }
.edge { flex: 1; min-width: 20px; margin: 0; }
.flat { width: 26px; background: none; margin-right: 1px; padding: 0 1px 0 4px; }
.flat:not(:has(.ch)) { justify-content: center; padding: 0; }
.flat.on { background: #bfbec4; }
.links { display: grid; flex: none; grid-template-columns: 27px 70px 8px; align-items: center; row-gap: 3px; line-height: 10px; }
.links .ic { height: 10px; justify-self: center; }
.round { width: 8px; height: 8px; border-radius: 4px; background: #fff; }
.hgt { width: 18px; height: 18px; margin: 0 5px 0 3px; }
.fields { display: flex; flex-direction: column; gap: 3px; width: 65px; flex: none; margin-right: 4px; }
.info input { height: 9px; background: #fff; padding: 0 2px; }
.thk { margin: 0 6px; }
.info .thin { width: 78px; flex: none; background: #f3f3f3; color: #b4b6b9; }

/* workspace */
.work { flex: 1; min-height: 0; display: flex; }
.grip { height: 1px; background: #c5c5c7; margin: 4px auto 0; }
h2 { display: flex; align-items: center; font: 500 7px/11px Roboto, sans-serif; background: #d4d4d6; height: 11px; }
.tri { width: 6px; height: 6px; margin-right: 3px; fill: #8b8b8d; stroke: none; }

.palette { width: 48px; flex: none; border-right: 1px solid #dfe0e2; background: linear-gradient(#eeeff1 359px, #ebebeb 359px); }
.palette .grip { width: 19px; margin-left: 12px; }
.top { display: flex; height: 18px; }
.top button { height: 17px; width: 21px; }
.top button + button { flex: 1; }
.top .on { border-radius: 0 3px 3px 0; padding-right: 4px; }
.palette h2 .tri { margin-left: -1px; }
.set { height: 152px; padding: 1px 0; display: grid; grid-template-columns: 17px 1fr; grid-template-rows: repeat(9, 1fr); }
.set button { min-height: 0; }

main { flex: 1; min-width: 0; display: flex; flex-direction: column; background: #efefef; }
.tabs { height: 15px; flex: none; display: flex; align-items: center; background: #ebebeb; overflow: hidden; margin-top: 1px; color: #4a4a4a; }
.tabs button { width: 64px; height: 13px; gap: 2px; padding-left: 8px; border-right: 1px solid #c6c6c8; }
.tabs .ic { width: 12px; height: 12px; }
.tabs .all { width: 20px; padding: 0; }
.tabs .cur { background: #fff; border: 0; }
.tabs .alert { background: radial-gradient(circle 2px at 20px 3px, #ff3b21 90%, transparent); }
.tabs .last { width: 84px; }
.more { width: 9px; height: 8px; margin-left: 3px; }
.tabs .navb { flex: 1; background: #f5f5f6; border: 0; padding: 0; margin-left: 1px; }
.tabs .navb .ic { width: 15px; height: 13px; }
.tabs .dn { color: #222; }

.canvas { flex: 1; min-height: 0; width: 100%; stroke: none; }
.ink { stroke: #4a4a4a; stroke-width: 1; }
.ink2 { stroke: #222; stroke-width: 1; }
.canvas .green { stroke: #3d7d42; }

.status { height: 12px; flex: none; display: flex; align-items: center; background: #ebebeb; }
.status > button { flex: 1; height: 12px; padding: 0 3px; border-left: 1px solid #dcdcde; }
.status span { flex: 1; text-align: center; padding-left: 3px; }
.zooms { width: 43px; display: flex; justify-content: space-around; }
.status .dim { color: #a9abad; }
.gap { display: flex; gap: 6px; justify-content: center; }

/* navigator */
.nav { width: 113px; flex: none; display: flex; flex-direction: column; border-left: 1px solid #dcdcde; padding-left: 1px; overflow: hidden; }
.nav .grip { width: 42px; flex: none; }
.maps { display: flex; align-items: center; height: 22px; flex: none; }
.maps button { width: 18px; height: 17px; }
.maps .on { width: 16px; margin-right: 1px; }
.maps hr { margin: 0 3px; }
.search { display: flex; align-items: center; height: 12px; flex: none; background: #fff; gap: 4px; padding: 1px 0 0 3px; }
.search input { flex: 1; }
.search input::placeholder { color: #aeb0b3; opacity: 1; }
.search .ic { width: 9px; height: 9px; }
.tree { flex: 1; min-height: 0; overflow: hidden; background: #fff; margin-top: 2px; color: #111; }
.tree ul { height: calc(100% + 12px); margin-top: -6px; list-style: none; display: flex; flex-direction: column; }
.tree li { flex: 1; min-height: 0; display: flex; align-items: center; }
.tree .ic { width: 12px; height: 12px; margin-right: 2px; }
.l0 { padding-left: 7px; }
.l0 .dn, .has .dn { margin-right: 2px; }
.l1 { padding-left: 25px; }
.l2 { padding-left: 34px; }
.l1.has { padding-left: 15px; }
.l2.has { padding-left: 24px; }
.picked { background: #dcdcdd; font-weight: 700; }
.hscroll { height: 7px; flex: none; background: #f8f8f8; padding: 1px 0; }
.hscroll i { display: block; width: 65px; height: 5px; border-radius: 3px; background: #c2c2c3; }
.acts { display: flex; flex: none; height: 22px; align-items: center; }
.acts button { width: 18px; height: 16px; }
.nav h2 { flex: none; padding-left: 3px; font-weight: 400; }
.nav h2 .tri { margin-right: 4px; }
.props { flex: none; padding-top: 2px; }
.props > div { display: flex; align-items: center; height: 12px; }
.props > .names { height: 13px; }
.props .ic { width: 10px; height: 10px; margin-right: 2px; }
.props input { background: #fff; height: 9px; padding: 0 2px; }
.vid { width: 24px; margin-right: 2px; }
.vname { flex: 1; }
.settings { height: 12px; background: #fff; border-radius: 3px; margin: 2px -18px 2px 0; }

.brand { height: 8px; flex: none; display: flex; align-items: center; justify-content: flex-end; gap: 5px; padding-top: 2px; overflow: hidden; margin-right: -11px; }
.brand span { border-left: 1px solid #aaa; padding-left: 7px; font: 500 9px/10px Lato, sans-serif; }
```
